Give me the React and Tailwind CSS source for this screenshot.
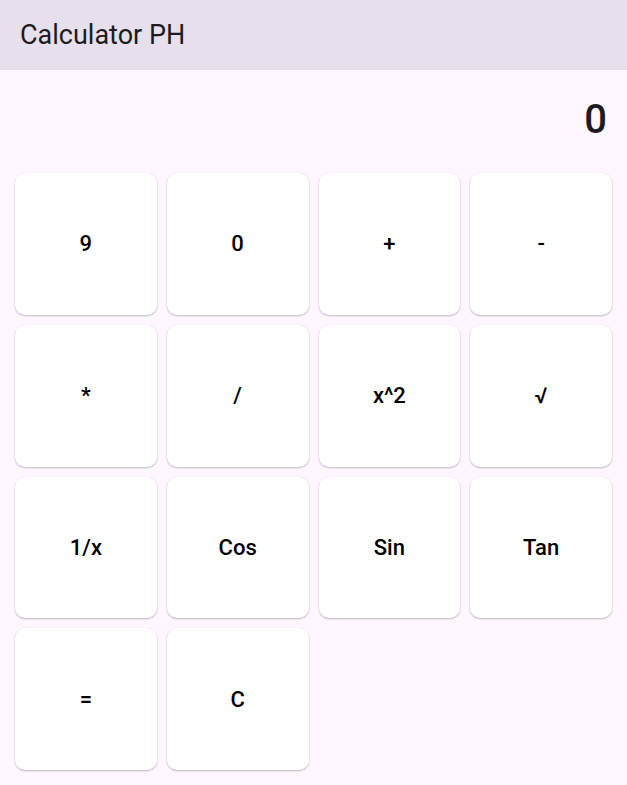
import React from 'react';

const keys = ['9', '0', '+', '-', '*', '/', 'x^2', '√', '1/x', 'Cos', 'Sin', 'Tan', '=', 'C'];

const App = () => {
  return (
    <div className="min-h-[785px] bg-[#fef7ff] text-[#1d1b20]" style={{ fontFamily: 'Roboto, "Noto Sans", sans-serif' }}>
      <header className="h-[70px] bg-[#e7e0ec] flex items-center px-[20px]">
        <h1 className="text-[27px] font-normal leading-none">Calculator PH</h1>
      </header>

      {/* display */}
      <div className="h-[88px] pt-[30px] pr-[20px] flex justify-end">
        <span className="text-[40px] font-medium leading-none">0</span>
      </div>

      <div className="grid grid-cols-4 p-[10px]">
        {keys.map((k) => (
          <button
            key={k}
            className="m-[5px] aspect-square rounded-[10px] bg-white shadow-[0_1px_2px_rgba(0,0,0,0.25),0_0_1px_rgba(0,0,0,0.08)] flex items-center justify-center text-[22px] font-medium text-black"
          >
            {k}
          </button>
        ))}
      </div>
    </div>
  );
};

export default App;
